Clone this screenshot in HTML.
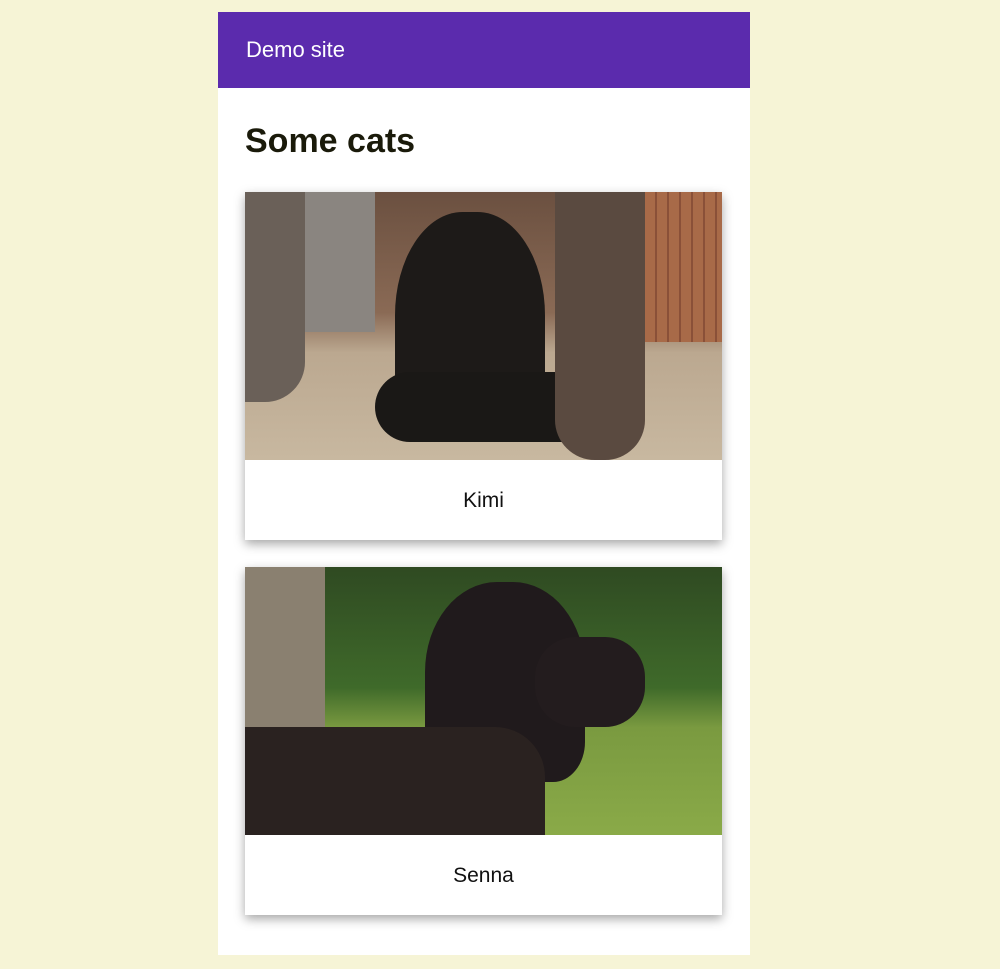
<!DOCTYPE html>
<html><head><meta charset="utf-8"><style>
html,body{margin:0;padding:0}
body{width:1000px;height:969px;background:#f6f4d6;font-family:"Liberation Sans",sans-serif;position:relative;overflow:hidden}
.wrap{position:absolute;left:218px;top:12px;width:532px;height:943px;background:#fff}
.hdr{height:76px;background:#5b2bad;color:#fff;font-size:22px;line-height:76px;padding-left:28px}
h1{position:absolute;left:27px;top:110px;margin:0;font-size:34px;font-weight:bold;color:#1a1a0a}
.card{position:absolute;left:27px;width:477px;background:#fff;box-shadow:0 4px 10px rgba(0,0,0,.35)}
.img{height:268px;position:relative;overflow:hidden}
.cap{height:80px;text-align:center;line-height:82px;font-size:21px;color:#111}
</style></head><body>
<div class="wrap">
<div class="hdr">Demo site</div>
<h1>Some cats</h1>
<div class="card" style="top:180px">
<div class="img" style="background:linear-gradient(180deg,#6b5040 0%,#8a6a55 45%,#bba890 60%,#c8b8a0 100%)">
<div style="position:absolute;left:340px;top:0;width:137px;height:150px;background:repeating-linear-gradient(90deg,#a86a48 0 10px,#8a5038 10px 12px)"></div>
<div style="position:absolute;left:0;top:0;width:130px;height:140px;background:#8a8580"></div>
<div style="position:absolute;left:150px;top:20px;width:150px;height:230px;background:#1d1a18;border-radius:45% 45% 20% 20%"></div>
<div style="position:absolute;left:130px;top:180px;width:260px;height:70px;background:#1a1816;border-radius:40px"></div>
<div style="position:absolute;left:310px;top:0;width:90px;height:268px;background:#5a4a40;border-radius:0 0 40px 40px"></div>
<div style="position:absolute;left:0;top:0;width:60px;height:210px;background:#6a6058;border-radius:0 0 40px 0"></div>
</div>
<div class="cap">Kimi</div></div>
<div class="card" style="top:555px">
<div class="img" style="background:linear-gradient(180deg,#2f4a22 0%,#3f6a2a 45%,#7a9a40 60%,#8aaa48 100%)">
<div style="position:absolute;left:0;top:0;width:80px;height:180px;background:#8a8070"></div>
<div style="position:absolute;left:180px;top:15px;width:160px;height:200px;background:#201a1c;border-radius:45% 45% 20% 20%"></div>
<div style="position:absolute;left:290px;top:70px;width:110px;height:90px;background:#231c1e;border-radius:40px"></div>
<div style="position:absolute;left:0;top:160px;width:300px;height:108px;background:#2a2220;border-radius:0 50px 0 0"></div>
</div>
<div class="cap">Senna</div></div>
</div>
</body></html>
